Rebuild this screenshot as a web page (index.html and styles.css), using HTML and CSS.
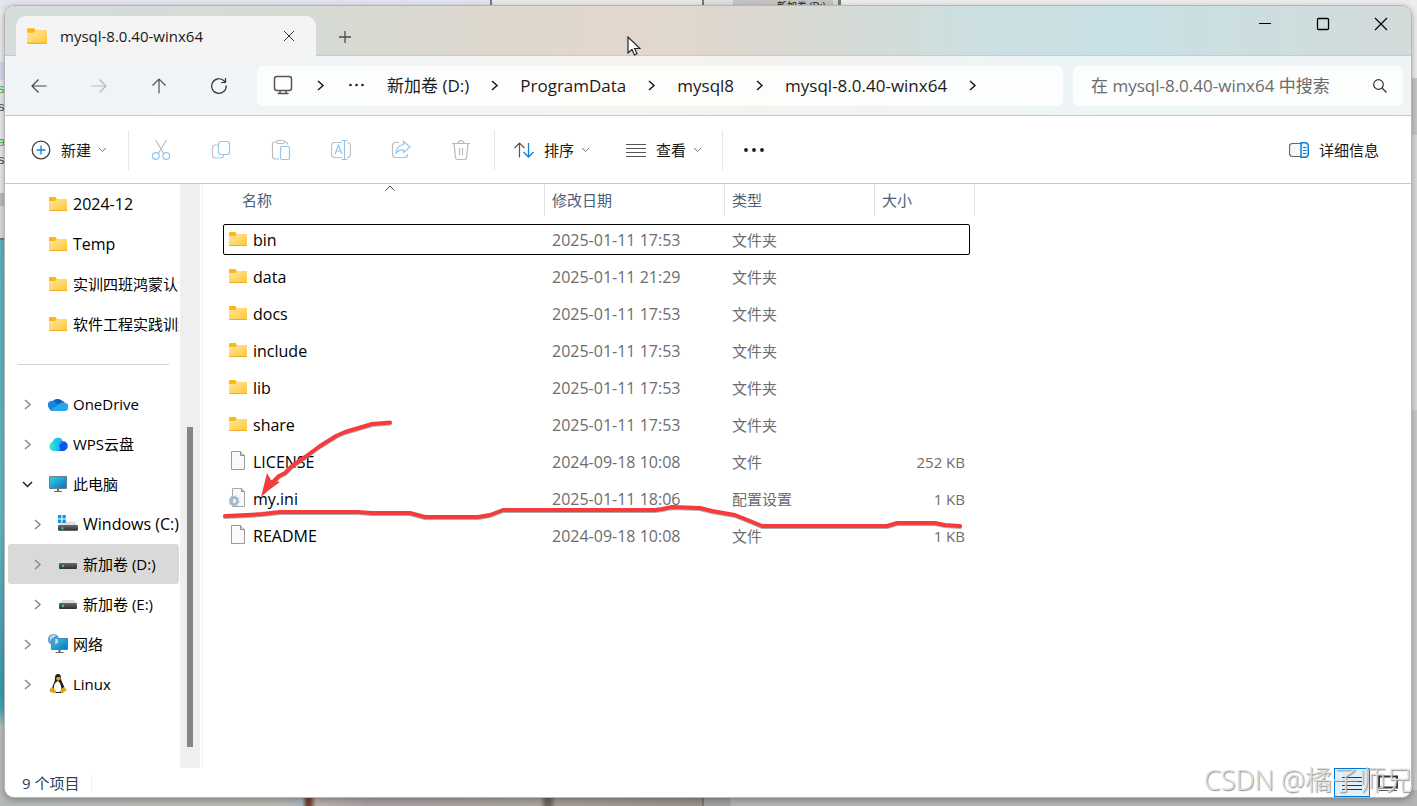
FILE: index.html
```html
<!DOCTYPE html>
<html lang="zh-CN">
<head>
<meta charset="utf-8">
<title>mysql-8.0.40-winx64</title>
<link rel="stylesheet" href="styles.css">
</head>
<body>
<svg class="defs" width="0" height="0" aria-hidden="true">
  <defs>
    <linearGradient id="gFolder" x1="0" y1="0" x2="1" y2="1"><stop offset="0" stop-color="#ffe7a0"/><stop offset="1" stop-color="#ffc83a"/></linearGradient>
    <linearGradient id="gScreen" x1="0" y1="0" x2="1" y2="1"><stop offset="0" stop-color="#35d3dc"/><stop offset="1" stop-color="#0b6fc4"/></linearGradient>
    <linearGradient id="gDrive" x1="0" y1="0" x2="0" y2="1"><stop offset="0" stop-color="#6a6a6a"/><stop offset="1" stop-color="#2f2f2f"/></linearGradient>
    <linearGradient id="gWps" x1="0" y1="0" x2="1" y2="0"><stop offset="0" stop-color="#3cf0b4"/><stop offset=".5" stop-color="#19b6f4"/><stop offset="1" stop-color="#0c4fe0"/></linearGradient>
    <symbol id="folder" viewBox="0 0 18 16"><path d="M0 2Q0 1 1 1h5q1 0 1 1l1 1h9q1 0 1 1v10q0 1-1 1H1q-1 0-1-1z" fill="#fdb913"/><path d="M0 5h6l2-2h9q1 0 1 1v10H0z" fill="url(#gFolder)"/><path d="M0 14h18q0 1-1 1H1q-1 0-1-1z" fill="#efad2c"/></symbol>
    <symbol id="file" viewBox="0 0 18 20"><path d="M2.500.500h9l4 4v14h-13z" fill="#f9f9f9" stroke="#9b9b9b"/><path d="M11.500.500v4h4" fill="#dcdcdc" stroke="#8a8a8a"/></symbol>
    <symbol id="config" viewBox="0 0 18 20"><path d="M3.500.500h9l3 3v15h-12z" fill="#f6f8fa" stroke="#a3a9ae"/><path d="M12.500.500v3h3" fill="#dcdcdc" stroke="#8a8a8a"/><circle cx="5" cy="13" r="3.500" fill="none" stroke="#a3b7c9" stroke-width="2.600"/><circle cx="5" cy="13" r="4.800" fill="none" stroke="#b3c4d3" stroke-width="1.600" stroke-dasharray="2 1.700"/><circle cx="5" cy="13" r="1.500" fill="#e5edf4"/></symbol>
    <symbol id="drive" viewBox="0 0 18 16"><path d="M3 4h12l3 4H0z" fill="#dedfe1"/><rect y="7" width="18" height="6" rx="1" fill="url(#gDrive)"/><rect x="3" y="9" width="2" height="2" fill="#38d14c"/></symbol>
    <symbol id="windrive" viewBox="0 0 18 16"><path d="M4 6h11l3 4H0z" fill="#dedfe1"/><rect y="9" width="18" height="5" rx="1" fill="url(#gDrive)"/><rect x="3" y="11" width="2" height="2" fill="#38d14c"/><path d="M0 0h3v3H0zM4 0h3v3H4zM0 4h3v3H0zM4 4h3v3H4z" fill="#1792e0"/></symbol>
    <symbol id="onedrive" viewBox="0 0 20 16"><path d="M4 7a6 5.500 0 0 1 10.500-2A5 5 0 0 1 17 7L8 13 2 12A4 4 0 0 1 4 6z" fill="#0a63bd"/><path d="M1 12A4 4 0 0 1 7 6l9 6-8 3H4a4 4 0 0 1-3-3z" fill="#1587dc"/><path d="M3 14l7-5a6 6 0 0 1 7-2 4 4 0 0 1-1 8H5q-1 0-2-1z" fill="#28a8ea"/></symbol>
    <symbol id="wps" viewBox="0 0 20 16"><path d="M5 5.500A5 5 0 0 1 14.500 5 5 5 0 0 1 15 15H5A5 5 0 0 1 5 5.500z" fill="url(#gWps)"/><path d="M11 10a5 5 0 0 1 7-3 5 5 0 0 1-3 8h-5q4-1 1-5z" fill="#0b57e6"/><path d="M5 5a5 5 0 0 1 9 0q-5 0-6 4Q7 6 5 5z" fill="#18c8f5" opacity=".8"/></symbol>
    <symbol id="pc" viewBox="0 0 18 16"><path d="M.500.500h17v12H.500z" fill="url(#gScreen)" stroke="#6a7f8c"/><path d="M8 13h2v2h3v1H5v-1h3z" fill="#5f6a71"/></symbol>
    <symbol id="network" viewBox="0 0 20 20"><path d="M3.500 4.500h16v11h-16z" fill="url(#gScreen)" stroke="#3b87b8"/><path d="M10.500 16h2v2h3v1h-8v-1h3z" fill="#5f6a71"/><circle cx="5.500" cy="5.500" r="5.500" fill="#4b9cd0"/><path d="M2 3q3-3 6-2Q6 4 4 4.500T3 8Q1 6 2 3zM7 5q3-1 3 2T7 10q1-3 0-5z" fill="#bfe1f2"/></symbol>
    <symbol id="tux" viewBox="0 0 18 20"><path d="M6 4Q6 0 9 0t3 4q0 3 2 6t1 6l-3 3H6l-3-3q0-4 2-7 1-2 1-5z" fill="#1d1d1d"/><path d="M9 7q2 1 3 5t-1 6H7q-3-2-2-6t4-5z" fill="#fff"/><path d="M8 3h3l1 2-3 2-2-2z" fill="#d9a829"/><path d="M3 13l4 4q1 3-2 2l-4-1q-1-1 0-3zM15 13l-3 2v4q1 1 3-1l3-2z" fill="#dba514"/></symbol>
    <symbol id="chev" viewBox="0 0 9 13"><path d="M2 2l5 4.500L2 11" fill="none" stroke="currentColor" stroke-width="1.500"/></symbol>
    <symbol id="caret" viewBox="0 0 9 6"><path d="M1 1l3.500 3.500L8 1" fill="none" stroke="currentColor"/></symbol>
  </defs>
</svg>

<div class="desktop" aria-hidden="true">
  <div class="back-top"><span class="back-tab">新加卷 (D:)</span></div>
  <div class="back-code"><i class="g">s</i><i>s</i><i class="g two">a</i><i>s</i></div>
  <div class="back-art"></div>
  <div class="back-right"></div>
  <div class="back-bottom"></div>
</div>

<div class="window">
  <header class="titlebar">
    <div class="tab">
      <svg class="tab-folder" width="20" height="18"><use href="#folder"/></svg>
      <span class="tab-title">mysql-8.0.40-winx64</span>
      <button class="icon-btn tab-close" aria-label="关闭标签页"><svg width="12" height="12" viewBox="0 0 12 12"><path d="M1 1l10 10M11 1L1 11" stroke="#333" fill="none"/></svg></button>
    </div>
    <button class="icon-btn new-tab" aria-label="新标签页"><svg width="14" height="14" viewBox="0 0 14 14"><path d="M7 1v12M1 7h12" stroke="#4a4a4a" stroke-width="1.300"/></svg></button>
    <div class="caption">
      <button class="icon-btn" aria-label="最小化"><svg width="14" height="14" viewBox="0 0 14 14"><path d="M1 6.500h12" stroke="#000"/></svg></button>
      <button class="icon-btn" aria-label="最大化"><svg width="14" height="14" viewBox="0 0 14 14"><rect x="1.500" y="1.500" width="11" height="11" rx="1" fill="none" stroke="#000" stroke-width="1.300"/></svg></button>
      <button class="icon-btn" aria-label="关闭"><svg width="14" height="14" viewBox="0 0 14 14"><path d="M1 1l12 12M13 1L1 13" stroke="#000" stroke-width="1.200"/></svg></button>
    </div>
  </header>

  <nav class="navbar">
    <div class="nav-btns">
      <button class="icon-btn" aria-label="后退"><svg width="16" height="16" viewBox="0 0 16 16"><path d="M15.500 8H1M7.500 1.500L1 8l6.500 6.500" fill="none" stroke="#444" stroke-width="1.200"/></svg></button>
      <button class="icon-btn" aria-label="前进"><svg width="16" height="16" viewBox="0 0 16 16"><path d="M.500 8H15M8.500 1.500L15 8l-6.500 6.500" fill="none" stroke="#b4b8ba" stroke-width="1.200"/></svg></button>
      <button class="icon-btn" aria-label="向上"><svg width="16" height="16" viewBox="0 0 16 16"><path d="M8 15.500V1M1.500 7.500L8 1l6.500 6.500" fill="none" stroke="#555" stroke-width="1.200"/></svg></button>
      <button class="icon-btn" aria-label="刷新"><svg width="18" height="18" viewBox="0 0 18 18"><path d="M16.200 8.500A7.300 7.300 0 1 1 14 3.800L15.500 5.500M15.500 1v4.500H11" fill="none" stroke="#333" stroke-width="1.200"/></svg></button>
    </div>
    <div class="address">
      <svg width="24" height="22" viewBox="0 0 24 22"><rect x="3.500" y="1.500" width="17" height="14" rx="2.500" fill="none" stroke="#555" stroke-width="1.500"/><path d="M9 15.500v3M15 15.500v3M6.500 18.500h11" stroke="#555" stroke-width="1.500"/></svg>
      <svg width="9" height="13"><use href="#chev"/></svg>
      <svg width="20" height="14" viewBox="0 0 20 14"><g fill="#222"><circle cx="4.500" cy="6" r="1.300"/><circle cx="10.500" cy="6" r="1.300"/><circle cx="16.500" cy="6" r="1.300"/></g></svg>
      <a href="#">新加卷 (D:)</a>
      <svg width="9" height="13"><use href="#chev"/></svg>
      <a href="#">ProgramData</a>
      <svg width="9" height="13"><use href="#chev"/></svg>
      <a href="#">mysql8</a>
      <svg width="9" height="13"><use href="#chev"/></svg>
      <a href="#">mysql-8.0.40-winx64</a>
      <svg width="9" height="13"><use href="#chev"/></svg>
    </div>
    <label class="search">
      <input type="text" aria-label="搜索" placeholder="在 mysql-8.0.40-winx64 中搜索">
      <svg width="14" height="14" viewBox="0 0 14 14"><circle cx="5.500" cy="5.500" r="4.800" fill="none" stroke="#333" stroke-width="1.200"/><path d="M9 9l4.500 4.500" stroke="#333" stroke-width="1.200"/></svg>
    </label>
  </nav>

  <div class="toolbar">
    <div class="group first">
      <button class="cmd"><svg width="20" height="20" viewBox="0 0 20 20"><circle cx="10" cy="10" r="8.800" fill="none" stroke="#444" stroke-width="1.300"/><path d="M10 5.500v9M5.500 10h9" stroke="#0f7fd6" stroke-width="1.300"/></svg><span>新建</span><svg class="caret" width="9" height="6"><use href="#caret"/></svg></button>
    </div>
    <div class="group icons">
      <button class="icon-btn" disabled aria-label="剪切"><svg width="20" height="22" viewBox="0 0 20 22"><g fill="none" stroke-width="1.200"><path d="M4.500 1l8.500 14M15.500 1L7 15" stroke="#bdbdbd"/><circle cx="4.800" cy="17" r="3.400" stroke="#8ec8f2"/><circle cx="15.200" cy="17" r="3.400" stroke="#8ec8f2"/></g></svg></button>
      <button class="icon-btn" disabled aria-label="复制"><svg width="20" height="22" viewBox="0 0 20 22"><g fill="none" stroke-width="1.200"><path d="M7 6H4Q1.500 6 1.500 9v7q0 3 3 3h5q3 0 3-3" stroke="#c4c4c4"/><rect x="7.500" y="2.500" width="11" height="13" rx="2.500" stroke="#8ec8f2"/></g></svg></button>
      <button class="icon-btn" disabled aria-label="粘贴"><svg width="20" height="22" viewBox="0 0 20 22"><g fill="none" stroke-width="1.200"><path d="M8 20H4q-2.500 0-2.500-2.500v-13Q1.500 3 4 3h2M13 3h2q1.500 0 1.500 2.500" stroke="#bdbdbd"/><rect x="5.500" y="1.500" width="8" height="3" rx="1.500" stroke="#bdbdbd"/><rect x="9.500" y="7.500" width="9" height="13" rx="1.500" stroke="#8ec8f2"/></g></svg></button>
      <button class="icon-btn" disabled aria-label="重命名"><svg width="20" height="22" viewBox="0 0 20 22"><g fill="none" stroke-width="1.200"><path d="M11 18.500H3.500Q.500 18.500.500 15.500v-9q0-3 3-3H11M16 3.500q3.500 0 3.500 3v9q0 3-3.500 3" stroke="#c0c0c0"/><path d="M13.500 1.500v19M10.500 1.500h6M10.500 20.500h6M4 15l3.500-9L11 15M5 12h5" stroke="#8ec8f2"/></g></svg></button>
      <button class="icon-btn" disabled aria-label="共享"><svg width="20" height="22" viewBox="0 0 20 22"><g fill="none" stroke-width="1.200"><path d="M8 3.500H4.500q-3 0-3 3v9q0 3 3 3h9q3 0 3-3V15" stroke="#bdbdbd"/><path d="M12.500 2.500L19 8l-6.500 5.500V11Q8 10.500 5 14q.500-7.500 7.500-8.500z" stroke="#8ec8f2"/></g></svg></button>
      <button class="icon-btn" disabled aria-label="删除"><svg width="20" height="22" viewBox="0 0 20 22"><g fill="none" stroke="#b9b9b9" stroke-width="1.200"><path d="M1 4.500h18M3 4.500l1.500 14q.200 2 2 2h7q1.800 0 2-2l1.500-14M7 4.500q0-3 3-3t3 3M8.500 9v7M11.500 9v7"/></g></svg></button>
    </div>
    <div class="group views">
      <button class="cmd"><svg width="20" height="20" viewBox="0 0 20 20"><path d="M5.500 17.500V3M.500 8l5-5 5 5" fill="none" stroke="#555" stroke-width="1.200"/><path d="M14.500 3v14M9.500 12l5 5 5-5" fill="none" stroke="#0f7fd6" stroke-width="1.300"/></svg><span>排序</span><svg class="caret" width="9" height="6"><use href="#caret"/></svg></button>
      <button class="cmd"><svg width="20" height="20" viewBox="0 0 20 20"><path d="M0 4.500h20M0 8.500h20M0 12.500h20M0 16.500h20" stroke="#555"/></svg><span>查看</span><svg class="caret" width="9" height="6"><use href="#caret"/></svg></button>
    </div>
    <button class="icon-btn more" aria-label="查看更多"><svg width="22" height="8" viewBox="0 0 22 8"><g fill="#1a1a1a"><circle cx="3" cy="4" r="1.900"/><circle cx="11" cy="4" r="1.900"/><circle cx="19" cy="4" r="1.900"/></g></svg></button>
    <button class="cmd details"><svg width="20" height="20" viewBox="0 0 20 20"><path d="M12 3.500H3.500q-3 0-3 3v7q0 3 3 3H12" fill="#f8f8f8" stroke="#666" stroke-width="1.200"/><path d="M12 2.800h4q3.300 0 3.300 3.500v7.400q0 3.500-3.300 3.500h-4z" fill="#eaf5fd" stroke="#0f7fd6" stroke-width="1.500"/><path d="M14 7.500h3.500M14 10.500h3.500M14 13.500h3.500" stroke="#0f7fd6"/></svg><span>详细信息</span></button>
  </div>

  <div class="content">
    <aside class="sidebar">
      <ul class="tree">
        <li><a href="#"><span class="tw"></span><svg width="20" height="16"><use href="#folder"/></svg><span>2024-12</span></a></li>
        <li><a href="#"><span class="tw"></span><svg width="20" height="16"><use href="#folder"/></svg><span>Temp</span></a></li>
        <li><a href="#"><span class="tw"></span><svg width="20" height="16"><use href="#folder"/></svg><span class="zh">实训四班鸿蒙认证</span></a></li>
        <li><a href="#"><span class="tw"></span><svg width="20" height="16"><use href="#folder"/></svg><span class="zh">软件工程实践训练</span></a></li>
        <li class="sep"></li>
        <li><a href="#"><svg class="tw" width="9" height="13"><use href="#chev"/></svg><svg width="20" height="16"><use href="#onedrive"/></svg><span class="zh">OneDrive</span></a></li>
        <li><a href="#"><svg class="tw" width="9" height="13"><use href="#chev"/></svg><svg width="20" height="16"><use href="#wps"/></svg><span class="zh">WPS云盘</span></a></li>
        <li><a href="#"><svg class="tw open" width="11" height="7" viewBox="0 0 11 7"><path d="M1 1l4.500 4.500L10 1" fill="none" stroke="#222" stroke-width="1.500"/></svg><svg width="20" height="16"><use href="#pc"/></svg><span class="zh">此电脑</span></a></li>
        <li class="sub"><a href="#"><svg class="tw" width="9" height="13"><use href="#chev"/></svg><svg width="20" height="18"><use href="#windrive"/></svg><span>Windows (C:)</span></a></li>
        <li class="sub current"><a href="#" aria-current="true"><svg class="tw" width="9" height="13"><use href="#chev"/></svg><svg width="20" height="16"><use href="#drive"/></svg><span class="zh">新加卷 (D:)</span></a></li>
        <li class="sub"><a href="#"><svg class="tw" width="9" height="13"><use href="#chev"/></svg><svg width="20" height="16"><use href="#drive"/></svg><span class="zh">新加卷 (E:)</span></a></li>
        <li><a href="#"><svg class="tw" width="9" height="13"><use href="#chev"/></svg><svg width="20" height="20"><use href="#network"/></svg><span class="zh">网络</span></a></li>
        <li><a href="#"><svg class="tw" width="9" height="13"><use href="#chev"/></svg><svg width="20" height="20"><use href="#tux"/></svg><span class="zh">Linux</span></a></li>
      </ul>
      <div class="scrollbar"><div class="thumb"></div></div>
    </aside>

    <main class="files">
      <svg class="sort-mark" width="10" height="6" viewBox="0 0 10 6"><path d="M.500 5.500L5 1l4.500 4.500" fill="none" stroke="#555"/></svg>
      <table>
        <colgroup><col class="c-name"><col class="c-date"><col class="c-type"><col class="c-size"></colgroup>
        <thead><tr><th>名称</th><th>修改日期</th><th>类型</th><th>大小</th></tr></thead>
        <tbody>
          <tr class="focus"><td><span class="name"><svg width="18" height="16"><use href="#folder"/></svg>bin</span></td><td class="date">2025-01-11 17:53</td><td>文件夹</td><td></td></tr>
          <tr><td><span class="name"><svg width="18" height="16"><use href="#folder"/></svg>data</span></td><td class="date">2025-01-11 21:29</td><td>文件夹</td><td></td></tr>
          <tr><td><span class="name"><svg width="18" height="16"><use href="#folder"/></svg>docs</span></td><td class="date">2025-01-11 17:53</td><td>文件夹</td><td></td></tr>
          <tr><td><span class="name"><svg width="18" height="16"><use href="#folder"/></svg>include</span></td><td class="date">2025-01-11 17:53</td><td>文件夹</td><td></td></tr>
          <tr><td><span class="name"><svg width="18" height="16"><use href="#folder"/></svg>lib</span></td><td class="date">2025-01-11 17:53</td><td>文件夹</td><td></td></tr>
          <tr><td><span class="name"><svg width="18" height="16"><use href="#folder"/></svg>share</span></td><td class="date">2025-01-11 17:53</td><td>文件夹</td><td></td></tr>
          <tr><td><span class="name"><svg width="18" height="20"><use href="#file"/></svg>LICENSE</span></td><td class="date">2024-09-18 10:08</td><td>文件</td><td>252 KB</td></tr>
          <tr><td><span class="name"><svg width="18" height="20"><use href="#config"/></svg>my.ini</span></td><td class="date">2025-01-11 18:06</td><td>配置设置</td><td>1 KB</td></tr>
          <tr><td><span class="name"><svg width="18" height="20"><use href="#file"/></svg>README</span></td><td class="date">2024-09-18 10:08</td><td>文件</td><td>1 KB</td></tr>
        </tbody>
      </table>
      <svg class="ink" width="760" height="130" viewBox="215 410 760 130" aria-hidden="true">
        <defs>
          <path id="line" d="M225 516L247 515 262 514 280 512H358L372 513H410L425 517H478L490 515 503 510H655L662 509 672 507 700 508 712 511 735 515 750 521 762 526H887L897 523H935L945 525 960 526"/>
          <path id="tail" d="M390 422.500L372 424 345 432 336 436 320 446 305 457 292 466 285 473 279 476 271 484"/>
        </defs>
        <g fill="none" stroke="#8c8c8c" stroke-width="4" stroke-linecap="round" stroke-linejoin="round" opacity=".7" transform="translate(0 1)"><use href="#line"/><use href="#tail"/></g>
        <g fill="none" stroke="#f43c3c" stroke-width="4" stroke-linecap="round" stroke-linejoin="round"><use href="#line"/><use href="#tail"/></g>
        <path d="M261 497l6-24 4 7 9 2-11 8z" fill="#f43c3c"/>
      </svg>
    </main>
  </div>

  <footer class="status">
    <span class="count">9 个项目</span>
    <div class="modes">
      <button class="icon-btn active" aria-label="详细信息视图"><svg width="20" height="16" viewBox="0 0 20 16"><path d="M0 2.500h20M0 6.500h20M0 10.500h20M0 14.500h20" stroke="#333"/></svg></button>
      <button class="icon-btn" aria-label="大图标视图"><svg width="22" height="18" viewBox="0 0 22 18"><path d="M2 2.500h18v11H2z" fill="none" stroke="#333" stroke-width="2"/><path d="M2 16.500h18" stroke="#555"/></svg></button>
    </div>
  </footer>
</div>

<svg class="pointer" width="14" height="21" viewBox="0 0 14 21" aria-hidden="true"><path d="M1 1v16l4-3.500 2.500 5.500 2.500-1.200-2.300-5.300H13z" fill="#fff" stroke="#222" stroke-width="1.200"/></svg>
<div class="watermark">CSDN @橘子师兄</div>
</body>
</html>
```
FILE: styles.css
```css
* { box-sizing: border-box; }

body {
  margin: 0;
  min-height: 100vh;
  padding: 5px 5px 8px 4px;
  display: flex;
  position: relative;
  overflow: hidden;
  background: #e4e4e4;
  font-family: "Open Sans", "Noto Sans CJK SC", sans-serif;
  font-size: 15px;
  color: #1a1a1a;
}

svg { display: block; flex: none; }
a { color: inherit; text-decoration: none; }
button { font: inherit; color: inherit; border: 0; padding: 0; background: none; }
.defs { position: absolute; }
.icon-btn { display: flex; align-items: center; justify-content: center; }

/* Whatever shows around the window */
.desktop { position: absolute; inset: 0; overflow: hidden; }
.back-top {
  position: absolute; inset: 0 0 auto; height: 12px;
  background: linear-gradient(90deg, #e2e3ef 0 490px, #777 490px 492px, #e9e9e9 492px 702px, #777 702px 704px, #e0e0e0 704px 733px, #c4c4c4 733px 833px, #dadada 833px 838px, #777 838px 841px, #ececec 841px);
}
.back-tab { position: absolute; left: 777px; top: -2px; font-size: 10px; line-height: 16px; }
.back-code {
  position: absolute; left: 0; top: 10px; width: 12px; height: 230px; padding-top: 70px;
  background: linear-gradient(#ececf0 0 52px, #d9d8ec 52px 70px, #e9e9ee 70px 183px, #bcbcbc 183px 196px, #dcdcdc 196px 228px, #777 228px);
  font: 13px/18px "Liberation Sans", sans-serif;
}
.back-code i { display: block; font-style: normal; margin-left: -2px; color: #444; }
.back-code .g { color: #45ad45; }
.back-code .two { margin-top: 17px; }
.back-art { position: absolute; left: 0; top: 240px; bottom: 0; width: 12px; background: linear-gradient(#5eb2c2, #68b7c5 50%, #3a9cad 80%, #49a8b6 83%, #bdbdbb 86%, #b9bab7); }
.back-right { position: absolute; right: 0; top: 0; bottom: 0; width: 12px; background: linear-gradient(#ececec 0 78px, #c6c6c6 78px 135px, #d9d9d9 135px 410px, #c9c9c9 410px); }
.back-bottom {
  position: absolute; inset: auto 0 0; height: 16px;
  background: linear-gradient(90deg, #b4b8b8 0, #b8b8b0 280px, #a9b8c2 302px, #70402f 307px, #70402f 310px, #b9b3ad 316px, #aaa0a5 370px, #aba59d 540px, #6f6560 546px, #6f6560 550px, #a79d98 556px, #98918c 702px, #555 703px, #a0a0a0 704px 730px, #b4b4b4 731px);
}

.window {
  position: relative;
  flex: 1;
  display: flex;
  flex-direction: column;
  border: 1px solid #b3b8b8;
  border-radius: 10px;
  overflow: hidden;
  background: #fff;
  box-shadow: 0 2px 6px rgba(0, 0, 0, .3);
}

.titlebar {
  display: flex;
  height: 50px;
  padding-left: 11px;
  border-bottom: 1px solid #c3cdcb;
  background: linear-gradient(90deg, #d4ddd9 0, #d6dad3 23%, #dcd8cf 32%, #e2d7cc 43%, #e0d7ce 49%, #d7dad4 58%, #cbdfe1 70%, #c8e0e4 80%, #d3dbda 100%);
}
.tab {
  display: flex;
  align-items: center;
  width: 300px;
  height: 40px;
  margin-top: 10px;
  padding: 0 21px 0 11px;
  border-radius: 10px 10px 0 0;
  background: #f3f4f3;
}
.tab-title { flex: 1; margin-left: 13px; font-size: 15px; font-weight: 500; }
.new-tab { width: 57px; height: 40px; margin-top: 11px; }
.caption { display: flex; margin-left: auto; padding-right: 1px; }
.caption .icon-btn { width: 58px; height: 36px; }

.navbar {
  display: flex;
  align-items: center;
  height: 60px;
  padding: 0 8px 0 4px;
  border-bottom: 1px solid #bfcccd;
  background: linear-gradient(90deg, #f0f4f6 0, #f1f5f6 23%, #f6f3f1 40%, #f5f2ef 50%, #f2f3f1 62%, #edf5f7 75%, #eff4f5 100%);
}
.nav-btns { display: flex; width: 248px; }
.nav-btns .icon-btn { width: 60px; height: 40px; }
.address {
  flex: 1;
  display: flex;
  align-items: center;
  gap: 21px;
  height: 40px;
  padding-left: 14px;
  border-radius: 6px;
  background: rgba(255, 255, 255, .8);
  font-size: 17px;
  line-height: 22px;
  white-space: nowrap;
}
.search {
  display: flex;
  align-items: center;
  width: 330px;
  height: 40px;
  margin-left: 10px;
  padding: 0 16px 0 18px;
  border-radius: 6px;
  background: rgba(255, 255, 255, .8);
}
.search input { flex: 1; min-width: 0; border: 0; padding: 0; outline: 0; background: none; font: inherit; font-size: 17px; }
.search input::placeholder { color: #6b6b6b; opacity: 1; }

.toolbar {
  display: flex;
  align-items: center;
  height: 68px;
  padding: 0 32px 0 26px;
  border-bottom: 1px solid #c4cccb;
}
.group { display: flex; align-items: center; height: 40px; border-right: 1px solid #e6e6e6; }
.cmd { display: flex; align-items: center; gap: 10px; }
.caret { color: #777; margin-left: -3px; }
.first { width: 98px; }
.icons { padding: 0 3px 0 2px; width: 366px; }
.icons .icon-btn { width: 60px; height: 40px; }
.views { gap: 36px; width: 228px; padding-left: 19px; }
.more { width: 62px; height: 40px; }
.details { margin-left: auto; }

.content { flex: 1; display: flex; min-height: 0; }
.sidebar { display: flex; width: 198px; padding-right: 2px; border-right: 1px solid #f2f2f2; }
.tree { flex: 1; min-width: 0; margin: 0; padding: 0 1px 0 3px; list-style: none; overflow: hidden; color: #000; font-size: 16px; }
.tree .zh { font-size: 15px; }
.tree li { height: 40px; border-radius: 3px; }
.tree a { display: flex; align-items: center; height: 40px; padding-left: 14px; white-space: nowrap; overflow: hidden; }
.tree a > span:last-child { margin-left: 5px; line-height: 22px; }
.tree .tw { width: 11px; margin-right: 15px; color: #8a8a8a; flex: none; }
.tree .sub a { padding-left: 24px; }
.tree .current { background: #d9d9d9; }
.tree .sep { margin: 0 10px; background: linear-gradient(#d2d2d2, #d2d2d2) center / 100% 1px no-repeat; }
.scrollbar { width: 20px; padding: 243px 7px 0; background: #efefef; }
.thumb { height: 320px; background: #858585; }

.files { position: relative; flex: 1; padding-left: 20px; }
.files table { width: 752px; table-layout: fixed; border-collapse: collapse; }
.c-name { width: 322px; }
.c-date { width: 180px; }
.c-type { width: 150px; }
.c-size { width: 100px; }
th, td { height: 37px; padding: 0 0 0 7px; text-align: left; font-weight: 400; color: #6d6d6d; white-space: nowrap; line-height: 22px; }
th { padding-bottom: 5px; color: #4c607a; background: linear-gradient(#e2e2e2, #e2e2e2) right top / 1px 32px no-repeat; }
th:first-child { padding-left: 19px; }
td:first-child { padding-left: 6px; color: #000; font-size: 16px; }
td.date { font-size: 16px; }
td:last-child { padding: 0 10px 0 0; text-align: right; }
.name { display: flex; align-items: center; gap: 6px; }
.name svg { margin-bottom: 2px; }
.focus { position: relative; }
.focus::after { content: ""; position: absolute; inset: 3px 5px 3px 0; border: 1px solid #000; border-radius: 2px; }
.sort-mark { position: absolute; left: 182px; top: 1px; }
.ink { position: absolute; left: 12px; top: 226px; }

.status { display: flex; align-items: center; justify-content: space-between; height: 29px; padding-left: 17px; }
.count { padding-right: 12px; border-right: 1px solid #f0f0f0; line-height: 16px; color: #24405f; }
.modes { display: flex; padding-right: 5px; }
.modes .icon-btn { width: 36px; height: 29px; }
.modes .active { border: 1px solid #0078d7; background: #e0f0fb; }

.pointer { position: absolute; left: 627px; top: 36px; }
.watermark {
  position: absolute; right: 4px; bottom: 6px;
  font: 300 27px/40px "Open Sans", "Noto Sans CJK SC", sans-serif;
  color: #dedede;
  text-shadow: 1px 1px 1px #8c8c8c;
}
```
